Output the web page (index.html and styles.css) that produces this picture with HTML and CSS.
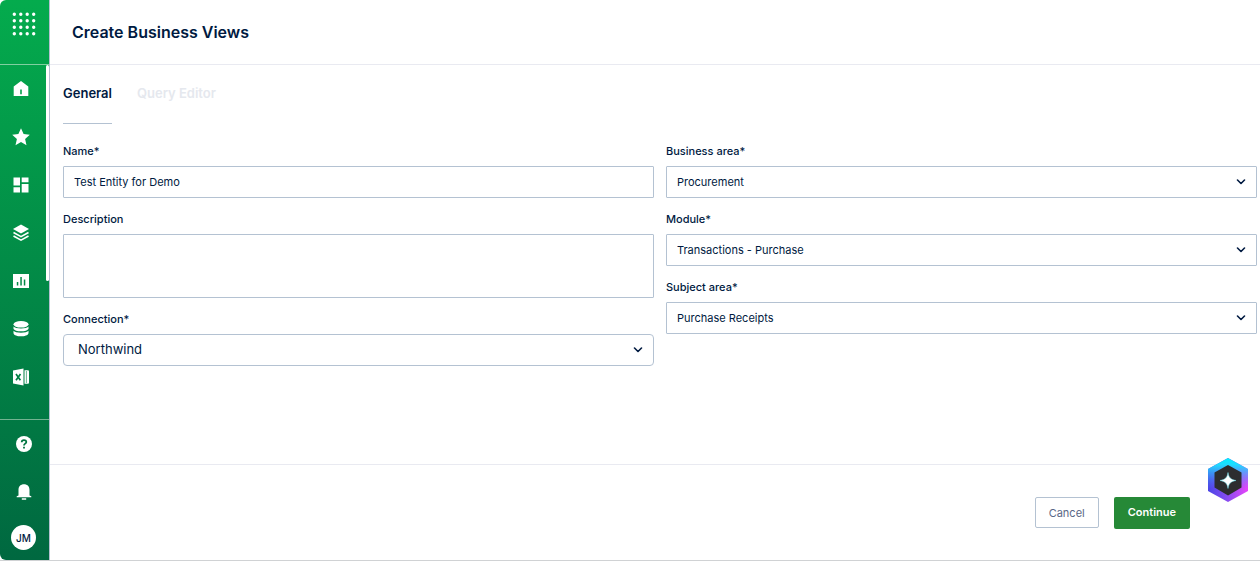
FILE: index.html
```html
<!DOCTYPE html>
<html lang="en">
<head>
  <meta charset="UTF-8" />
  <meta name="viewport" content="width=device-width, initial-scale=1.0" />
  <title>Create Business Views</title>
  <link rel="stylesheet" href="styles.css">
</head>
<body>
  <div class="app">
    <aside class="sidebar">
      <button class="launcher" aria-label="Apps">
        <svg width="24" height="24" viewBox="0 0 24 24" fill="none" stroke="#fff" stroke-width="3.4" stroke-linecap="round">
          <path d="M2.3 2.3h0M8.8 2.3h0M15.2 2.3h0M21.7 2.3h0M2.3 8.8h0M8.8 8.8h0M15.2 8.8h0M21.7 8.8h0M2.3 15.2h0M8.8 15.2h0M15.2 15.2h0M21.7 15.2h0M2.3 21.7h0M8.8 21.7h0M15.2 21.7h0M21.7 21.7h0" />
        </svg>
      </button>

      <nav class="side-nav">
        <a href="#" aria-label="Home">
          <svg width="18" height="18" viewBox="0 0 18 18" fill="#fff"><path fill-rule="evenodd" d="M9 1l7.3 5.4V16H1.7V6.400zM8.200 9.500v4.800h1.600V9.500z" /></svg>
        </a>
        <a href="#" aria-label="Favorites">
          <svg width="18" height="18" viewBox="0 0 18 18" fill="#fff"><path d="M9 .3l2.600 5.800 6.200.6-4.700 4.200 1.400 6.300L9 13.900l-5.500 3.300 1.400-6.300L.2 6.700l6.200-.6z" /></svg>
        </a>
        <a href="#" aria-label="Dashboards">
          <svg width="18" height="18" viewBox="0 0 18 18" fill="#fff"><path d="M1.500 1.500H8v8H1.500zM9.700 1.500h6.800v4.700H9.700zM9.700 8h6.800v8.500H9.700zM1.500 11.300H8v5.200H1.500z" /></svg>
        </a>
        <a href="#" aria-label="Layers">
          <svg width="18" height="18" viewBox="0 0 18 18" fill="#fff"><path d="M9 .5l8 4.500-8 4.500L1 5z" /><path d="M1.500 8.500L9 12.700l7.500-4.200M1.500 12L9 16.200l7.500-4.200" fill="none" stroke="#fff" stroke-width="1.600" /></svg>
        </a>
        <a href="#" aria-label="Reports">
          <svg width="18" height="18" viewBox="0 0 18 18" fill="#fff"><path fill-rule="evenodd" d="M1 2h16v14H1zM4.800 10v3.500h1.500V10zM8.300 5v8.500h1.500V5zM11.800 7.500v6h1.500v-6z" /></svg>
        </a>
        <a href="#" aria-label="Data">
          <svg width="18" height="18" viewBox="0 0 18 18" fill="#fff"><ellipse cx="9" cy="4.300" rx="7.500" ry="3.300" /><path d="M1.500 6.500C3 9 15 9 16.500 6.500v2.300c-1 3.400-14 3.400-15 0zM1.500 10.800c1.500 2.500 13.500 2.500 15 0v2.400c-1 4.200-14 4.200-15 0z" /></svg>
        </a>
        <a href="#" aria-label="Excel">
          <svg width="18" height="18" viewBox="0 0 18 18" fill="#fff"><path d="M1 2.400L11.500.5v17L1 15.600zM12.500 2.300h3.200c.8 0 1.300.5 1.300 1.300v10.800c0 .8-.5 1.300-1.300 1.300h-3.200z" /><path d="M4 6l4.400 6.200M8.500 6L4 12.200" stroke="#007f43" stroke-width="1.700" /><path d="M14.400 3v12" stroke="#007f43" stroke-width=".6" /></svg>
        </a>
        <span class="scroll-thumb"></span>
      </nav>

      <div class="side-foot">
        <button aria-label="Help">
          <svg width="18" height="18" viewBox="0 0 18 18"><circle cx="9" cy="9" r="8" fill="#fff" /><path d="M6.700 7.300C6.700 4.300 11.300 4.400 11.300 7c0 1.600-2.300 1.700-2.300 3.500M9 11.700v1.800" fill="none" stroke="#007540" stroke-width="1.800" /></svg>
        </button>
        <button aria-label="Notifications">
          <svg width="18" height="18" viewBox="0 0 18 18" fill="#fff"><path d="M3.500 12.500V7c0-3.600 2.200-5.700 5.500-5.700S14.500 3.400 14.500 7v5.500l1.800.8v1H1.700v-1zM6.800 15.200h4.400v1.500H6.800z" /></svg>
        </button>
        <button class="avatar">JM</button>
      </div>
    </aside>

    <main class="main">
      <header class="page-header">
        <h1>Create Business Views</h1>
      </header>

      <form class="content">
        <div class="tabs" role="tablist">
          <button type="button" role="tab" class="tab active" aria-selected="true">General</button>
          <button type="button" role="tab" class="tab" disabled>Query Editor</button>
        </div>

        <div class="form-grid">
          <div class="column">
            <div class="field">
              <label for="name">Name*</label>
              <input type="text" id="name" value="Test Entity for Demo">
            </div>
            <div class="field">
              <label for="description">Description</label>
              <textarea id="description"></textarea>
            </div>
            <div class="field">
              <label for="connection">Connection*</label>
              <div class="select-wrap">
                <select id="connection" class="rounded"><option>Northwind</option></select>
                <svg width="10" height="6" viewBox="0 0 10 6"><path d="M1.500 1L5 4.500 8.500 1" /></svg>
              </div>
            </div>
          </div>

          <div class="column">
            <div class="field">
              <label for="area">Business area*</label>
              <div class="select-wrap">
                <select id="area"><option>Procurement</option></select>
                <svg width="10" height="6" viewBox="0 0 10 6"><path d="M1.500 1L5 4.500 8.500 1" /></svg>
              </div>
            </div>
            <div class="field">
              <label for="module">Module*</label>
              <div class="select-wrap">
                <select id="module"><option>Transactions - Purchase</option></select>
                <svg width="10" height="6" viewBox="0 0 10 6"><path d="M1.500 1L5 4.500 8.500 1" /></svg>
              </div>
            </div>
            <div class="field">
              <label for="subject">Subject area*</label>
              <div class="select-wrap">
                <select id="subject"><option>Purchase Receipts</option></select>
                <svg width="10" height="6" viewBox="0 0 10 6"><path d="M1.500 1L5 4.500 8.500 1" /></svg>
              </div>
            </div>
          </div>
        </div>
      </form>

      <footer class="actions">
        <button class="btn btn-cancel">Cancel</button>
        <button class="btn btn-continue">Continue</button>
      </footer>
    </main>
  </div>

  <button class="assistant" aria-label="Assistant">
    <svg width="40" height="44" viewBox="0 0 40 44">
      <defs>
        <linearGradient id="hexBase" x1="0" y1="0" x2="1" y2="0">
          <stop offset="0" stop-color="#4a45e6" />
          <stop offset=".5" stop-color="#8a4cf0" />
          <stop offset="1" stop-color="#e845fa" />
        </linearGradient>
        <linearGradient id="hexTop" x1="0" y1="0" x2="0" y2="1">
          <stop offset="0" stop-color="#00f0ff" />
          <stop offset=".15" stop-color="#1edcff" />
          <stop offset=".7" stop-color="#4a80f5" stop-opacity="0" />
        </linearGradient>
      </defs>
      <path d="M20 0l20 11v22L20 44 0 33V11z" fill="url(#hexBase)" />
      <path d="M20 0l20 11v22L20 44 0 33V11z" fill="url(#hexTop)" />
      <path d="M20 7l13.500 7.500v15L20 37.500l-13.500-8v-15z" fill="#2d2d2f" />
      <path d="M20 14.500c.8 5 2.500 7 8 8-5.500 1-7.200 3-8 8-.8-5-2.500-7-8-8 5.500-1 7.200-3 8-8z" fill="#fff" stroke="#6fe6f2" stroke-width=".5" />
    </svg>
  </button>
</body>
</html>
```

FILE: styles.css
```css
* { box-sizing: border-box; }
body { font-family: Inter, "Liberation Sans", sans-serif; font-size: 11px; color: #001a41; background: #fff; margin: 0; }
button { font: inherit; cursor: pointer; }
.app { display: flex; height: 100vh; border-bottom: 1px solid #d0d2d4; }

.sidebar { display: flex; flex-direction: column; width: 50px; flex-shrink: 0; background: linear-gradient(#04ab4d, #006840) padding-box; border-right: 1px solid #b4c0d0; border-radius: 6px 0 0 6px; }
.launcher { display: flex; justify-content: center; align-items: center; height: 65px; padding: 0 2px 16px 0; background: none; border: 0; border-bottom: 1px solid #81cfa1; }
.launcher svg { flex-shrink: 0; }
.side-nav { position: relative; flex: 1; min-height: 0; overflow: hidden; }
.side-nav a { display: flex; justify-content: center; align-items: center; height: 48px; padding-right: 7px; }
.scroll-thumb { position: absolute; top: 0; right: 0; width: 3px; height: 61%; background: #fff; border-radius: 2px; }
.side-foot { display: flex; flex-direction: column; align-items: center; padding: 0 2px 10px 0; border-top: 1px solid #74b391; }
.side-foot button { display: flex; justify-content: center; align-items: center; width: 48px; height: 48px; padding: 0; background: none; border: 0; }
.side-foot .avatar { width: 25px; height: 25px; margin-top: 9px; background: #fff; color: #001a41; border-radius: 50%; font-size: 10px; font-weight: 500; }

.main { display: flex; flex-direction: column; flex: 1; min-width: 0; }
.page-header { display: flex; align-items: center; height: 65px; padding: 0 22px; border-bottom: 1px solid #e9eaf1; }
.page-header h1 { margin: 0; font-size: 16px; font-weight: 600; }
.content { flex: 1; padding: 0 3px 0 13px; }
.tabs { display: flex; gap: 25px; }
.tab { height: 59px; padding: 0 0 2px; background: none; border: 0; border-bottom: 1px solid transparent; color: #001a41; font-size: 13px; font-weight: 600; }
.tab.active { border-bottom-color: #b4c2d2; }
.tab:disabled { color: #e5e8ee; }

.form-grid { display: grid; grid-template-columns: 1fr 1fr; gap: 12px; padding-top: 19px; }
.column { display: flex; flex-direction: column; gap: 13px; }
.field { display: flex; flex-direction: column; gap: 7px; }
.field label { line-height: 16px; font-weight: 500; }
.field input, .field textarea, .field select { display: block; width: 100%; height: 32px; padding: 0 10px; background: #fff; color: #001a41; font: inherit; border: 1px solid #b4c2d2; border-radius: 1px; }
.field textarea { height: 64px; padding: 8px 10px; resize: none; }
.select-wrap { position: relative; }
.select-wrap select { appearance: none; }
.select-wrap select.rounded { padding: 0 14px 2px; font-size: 13px; border-radius: 4px; }
.select-wrap svg { position: absolute; top: 13px; right: 11px; fill: none; stroke: #001a41; stroke-width: 1.6; stroke-linecap: round; stroke-linejoin: round; pointer-events: none; }

.actions { display: flex; justify-content: flex-end; gap: 15px; height: 96px; padding: 32px 70px 0 0; border-top: 1px solid #e9eaf1; }
.btn { height: 32px; padding: 0 13px; border-radius: 2px; }
.btn-cancel { height: 31px; background: #fff; color: #5a6786; border: 1px solid #b4c2d2; }
.btn-continue { padding: 0 14px 2px; background: #268937; color: #fff; border: 0; font-weight: 600; }

.assistant { position: fixed; right: 12px; bottom: 59px; padding: 0; background: none; border: 0; }
.assistant svg { display: block; }
```
